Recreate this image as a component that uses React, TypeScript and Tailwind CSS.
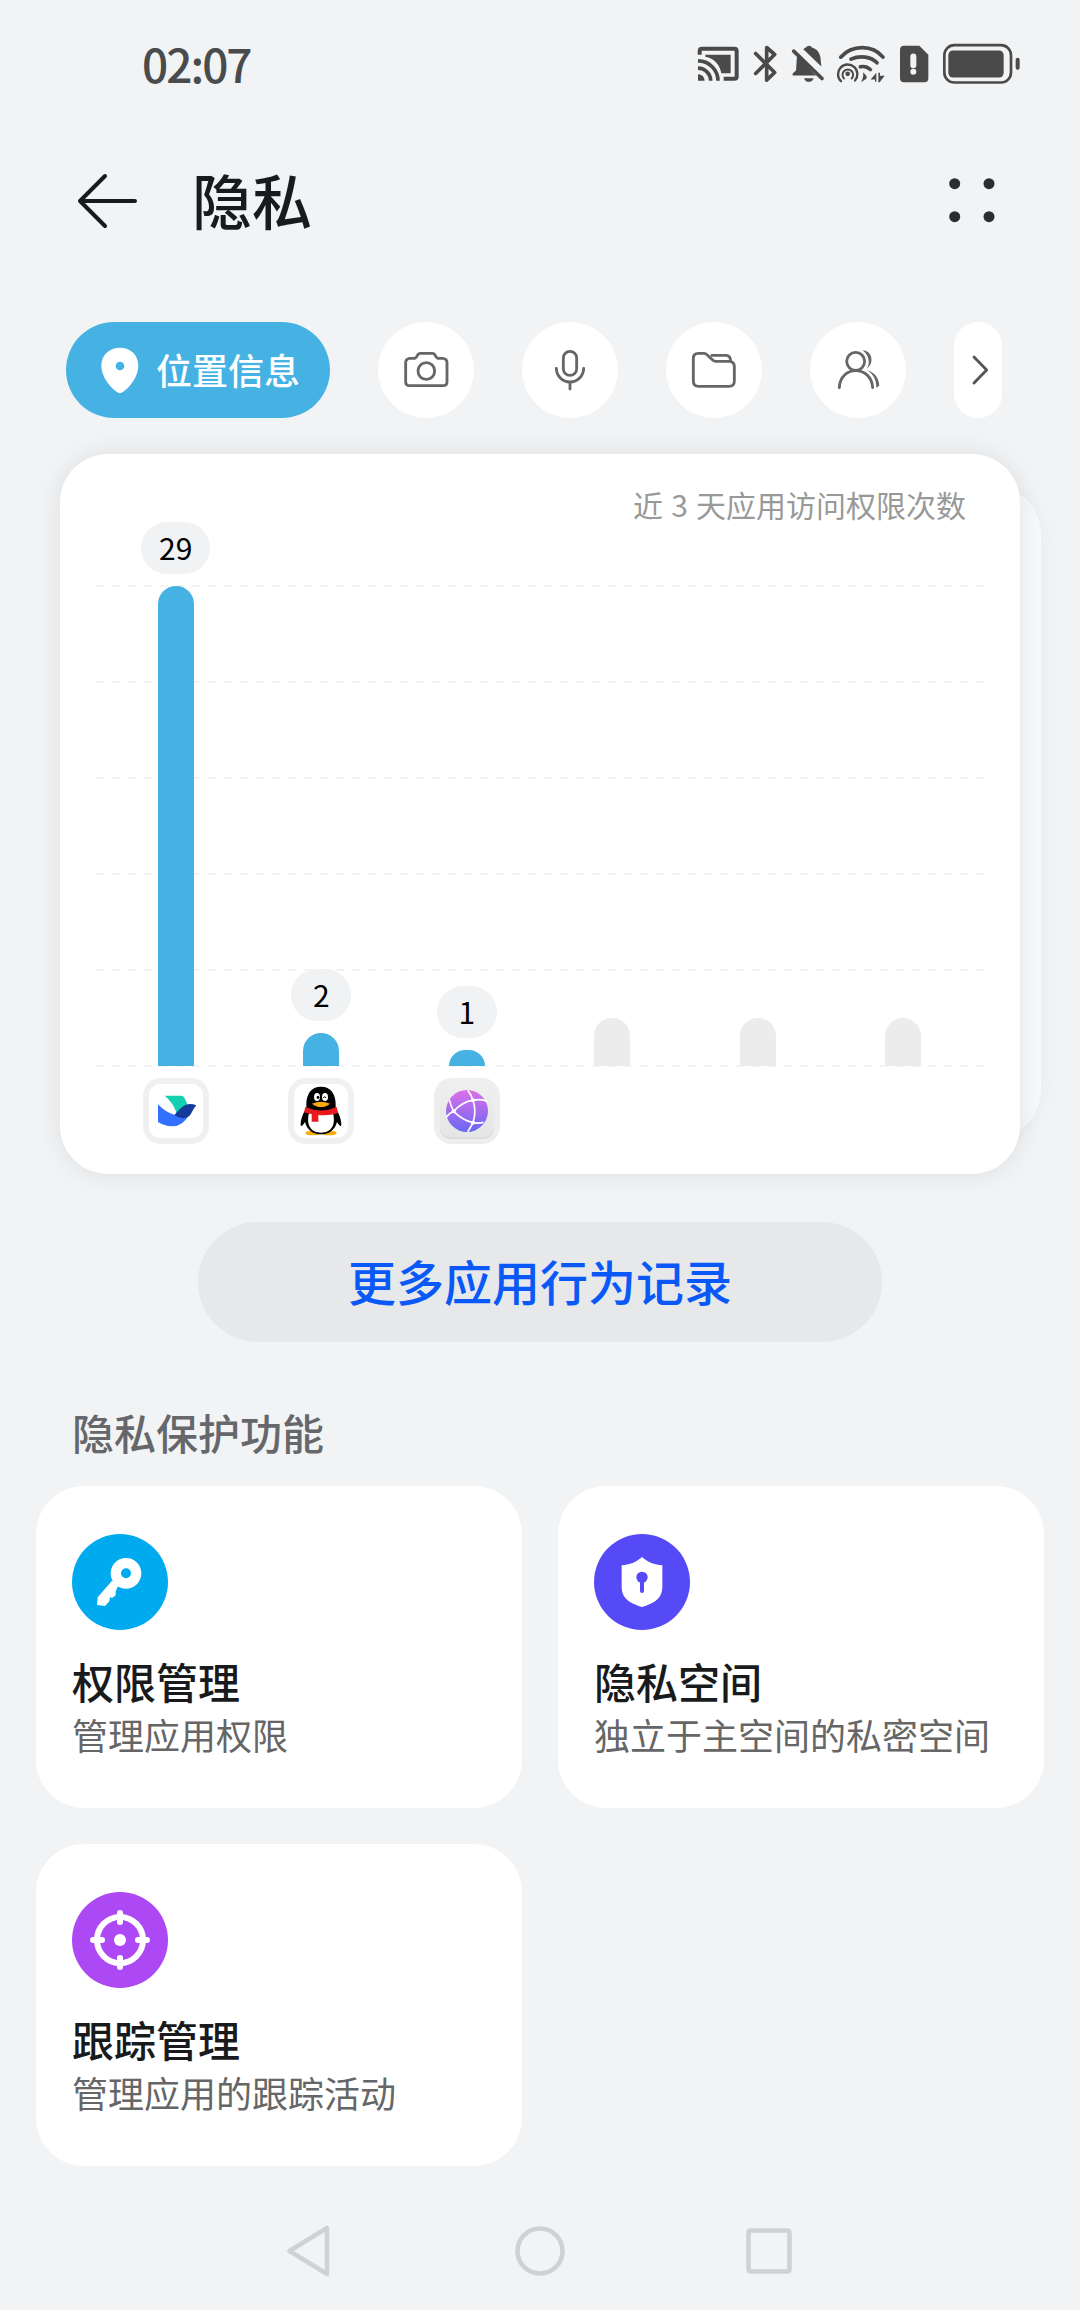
import type { ReactNode } from "react";

function StatusBar() {
  return (
    <header className="flex h-[130px] items-start justify-between pl-[142px] pr-[58px] pt-[36px]">
      <time className="text-[46px] leading-[54px] font-medium tracking-[-2px] text-[#4a4b4d]">02:07</time>
      <div className="mt-[7px] flex items-center text-[#4a4a4a]">
        <svg viewBox="50 40 135 125" className="h-[42px] w-[45px]" fill="none" stroke="currentColor">
          <path d="M61 75V64Q61 57 68 57H165Q172 57 172 64V140Q172 147 165 147H133" strokeWidth="12" />
          <path d="M78 75H154V130H126C121 104 104 86 78 81Z" fill="currentColor" stroke="none" />
          <path d="M56 93A60 60 0 0 1 116 153M56 115A38 38 0 0 1 94 153" strokeWidth="11" />
          <path d="M56 133A20 20 0 0 1 76 153H56Z" fill="currentColor" stroke="none" />
        </svg>
        <svg viewBox="185 40 135 125" className="h-[42px] w-[45px]" fill="none" stroke="currentColor" strokeWidth="11" strokeLinecap="round" strokeLinejoin="round">
          <path d="M229 71L286 128L262 151V53L286 74L229 131" />
        </svg>
        <svg viewBox="320 40 135 125" className="h-[42px] w-[45px]" fill="currentColor">
          <path d="M372 58Q376 54 380 53Q382 48 389 48Q396 48 398 53Q417 58 423 80L426 110Z" />
          <path d="M353 77L410 137H340V131L350 122Z" />
          <path d="M343 64L428 146" stroke="currentColor" strokeWidth="11" strokeLinecap="round" />
          <path d="M374 145H403Q399 156 388 156Q378 156 374 145Z" />
        </svg>
        <svg viewBox="455 40 180 125" className="h-[42px] w-[60px]" fill="none" stroke="currentColor" strokeWidth="11" strokeLinecap="round">
          <path d="M484 82C518 44 580 44 611 82" />
          <path d="M515 88C542 76 575 80 593 99" />
          <path d="M543 111C555 108 564 111 573 119" />
          <path d="M485 154A29 29 0 1 1 527 152" strokeWidth="7" />
          <path d="M494 146A16 16 0 1 1 517 146" strokeWidth="6" />
          <circle cx="505" cy="132" r="7" fill="currentColor" stroke="none" />
          <path d="M551 127Q566 139 561 147L545 157Q554 141 551 127ZM591 129V156H587V149H574ZM597 129H602V138H616L601 157H597Z" fill="currentColor" stroke="none" />
        </svg>
        <svg viewBox="635 40 135 125" className="h-[42px] w-[45px]" fill="currentColor">
          <path d="M674 48H720L747 75V145Q747 157 735 157H674Q662 157 662 145V60Q662 48 674 48Z" />
          <rect x="693" y="71" width="18" height="44" rx="9" fill="#f1f3f5" />
          <circle cx="702" cy="126" r="9" fill="#f1f3f5" />
        </svg>
        <svg viewBox="770 40 258 125" className="h-[42px] w-[86px]" fill="currentColor">
          <rect x="795" y="46" width="200" height="112" rx="30" fill="none" stroke="currentColor" strokeWidth="8" />
          <rect x="807" y="62" width="166" height="81" rx="14" />
          <rect x="1009" y="84" width="12" height="36" rx="6" />
        </svg>
      </div>
    </header>
  );
}

function TitleBar() {
  return (
    <div className="flex h-[142px] items-center pl-[72px] pr-[84px]">
      <svg viewBox="0 0 72 72" className="size-[72px]" fill="none" stroke="#191a1c" strokeWidth="4" strokeLinecap="round" strokeLinejoin="round">
        <path d="M33 11L8 36H63M33 61L8 36" />
      </svg>
      <h1 className="mb-[5px] ml-[48px] flex-1 text-[60px] leading-[72px] font-medium text-[#191a1c]">隐私</h1>
      <svg viewBox="0 0 48 48" className="size-12" fill="#2b2d2f">
        <circle cx="6.700" cy="6.700" r="5.500" />
        <circle cx="41" cy="6.700" r="5.500" />
        <circle cx="6.700" cy="39.700" r="5.500" />
        <circle cx="41" cy="39.700" r="5.500" />
      </svg>
    </div>
  );
}

function RoundTab({ viewBox, children }: { viewBox: string; children: ReactNode }) {
  return (
    <button className="flex size-24 items-center justify-center rounded-full bg-white">
      <svg viewBox={viewBox} className="size-12" fill="none" stroke="#666" strokeWidth="8.500" strokeLinejoin="round">
        {children}
      </svg>
    </button>
  );
}

function Tabs() {
  return (
    <nav className="flex h-24 gap-12 pl-[66px]">
      <button className="flex h-24 w-[264px] items-center gap-3 rounded-full bg-[#46b1e3] pl-[30px] text-[36px] leading-[48px] font-medium text-white">
        <svg viewBox="168 138 144 144" className="size-12">
          <path fillRule="evenodd" fill="white" d="M240 279C227 279 184 238 184 197C184 165 208 143 240 143C272 143 295 165 295 197C295 238 253 279 240 279ZM240 185a13 13 0 1 0 0 26a13 13 0 1 0 0-26Z" />
        </svg>
        <span className="mb-[3px]">位置信息</span>
      </button>
      <RoundTab viewBox="1085 138 144 144">
        <path d="M1123 175Q1129 173 1131 167Q1134 160 1140 160H1176Q1182 160 1185 167Q1187 173 1193 175H1208Q1220 177 1220 188V245Q1220 257 1208 257H1108Q1096 257 1096 245V188Q1096 177 1108 175Z" />
        <circle cx="1158" cy="213" r="25" />
      </RoundTab>
      <RoundTab viewBox="-42 138 144 144">
        <rect x="10" y="154" width="40" height="72" rx="20" />
        <path d="M-11 205A41 41 0 0 0 71 205M30 246V267" strokeLinecap="round" />
      </RoundTab>
      <RoundTab viewBox="390 138 144 144">
        <path d="M415 160H432Q437 160 441 164L458 180Q462 184 467 184H507Q523 184 523 200V243Q523 259 507 259H416Q400 259 400 243V175Q400 160 415 160Z" />
        <path d="M452 166H500Q512 168 512 184" />
      </RoundTab>
      <RoundTab viewBox="822 138 144 144">
        <circle cx="887" cy="184" r="27" />
        <path d="M838 263C840 195 934 195 938 263" strokeLinecap="round" />
        <path d="M908 151C938 152 943 191 921 206C928 194 932 171 908 151ZM922 210C946 218 957 237 958 257L949 263C949 240 940 223 922 210Z" fill="#666" stroke="none" />
      </RoundTab>
      <button className="flex h-24 w-12 items-center justify-center rounded-full bg-white">
        <svg viewBox="1182 138 144 144" className="size-12" fill="none" stroke="#555" strokeWidth="8.500" strokeLinecap="round" strokeLinejoin="round">
          <path d="M1242 171L1280 210L1242 249" />
        </svg>
      </button>
    </nav>
  );
}

function BirdIcon() {
  return (
    <svg viewBox="69 414 198 198" className="size-[66px]">
      <rect x="69" y="414" width="198" height="198" rx="54" fill="#f0f0f0" />
      <rect x="87" y="432" width="162" height="162" rx="34" fill="#fff" />
      <path d="M134 467H183Q190 467 193 473Q200 487 205 500L170 520Q160 488 134 467Z" fill="#14d0b0" />
      <path d="M114 493Q135 516 164 525L209 521Q190 559 156 559Q132 558 114 546Z" fill="#3370ff" />
      <path d="M163 525C175 512 184 500 196 495Q212 489 229 496C218 507 216 521 207 529Q187 542 163 525Z" fill="#133c9a" />
    </svg>
  );
}

function PenguinIcon() {
  return (
    <svg viewBox="505 414 198 198" className="size-[66px]">
      <rect x="505" y="414" width="198" height="198" rx="54" fill="#f0f0f0" />
      <rect x="523" y="432" width="162" height="162" rx="34" fill="#fff" />
      <ellipse cx="580" cy="579" rx="23" ry="7" fill="#faab07" />
      <ellipse cx="628" cy="579" rx="23" ry="7" fill="#faab07" />
      <path d="M604 440C574 440 560 463 560 493V505C549 522 542 541 543 556Q546 562 556 546C563 571 580 583 604 583C628 583 645 571 652 546Q662 562 665 556C666 541 659 522 648 505V493C648 463 634 440 604 440Z" fill="#000" />
      <path d="M568 520H640C650 559 631 578 604 578C577 578 558 559 568 520Z" fill="#fff" />
      <path d="M557 501Q604 522 651 501L655 519Q628 528 596 525V545H576V522Q562 521 553 517Z" fill="#e81a1f" />
      <ellipse cx="592" cy="471" rx="9" ry="12" fill="#fff" />
      <ellipse cx="616" cy="471" rx="9" ry="12" fill="#fff" />
      <ellipse cx="595" cy="472" rx="4" ry="5" fill="#000" />
      <path d="M611 474Q615 465 619 474" fill="none" stroke="#000" strokeWidth="3" />
      <path d="M577 491Q604 480 631 491Q619 501 604 501Q589 501 577 491Z" fill="#faab07" />
    </svg>
  );
}

function BrowserIcon() {
  return (
    <svg viewBox="942 414 198 198" className="size-[66px]">
      <defs>
        <linearGradient id="globe" x1="0" y1="0" x2="0" y2="1">
          <stop offset="0" stopColor="#dc70ea" />
          <stop offset="0.5" stopColor="#a56bed" />
          <stop offset="1" stopColor="#6868f4" />
        </linearGradient>
        <linearGradient id="tile" x1="0" y1="0" x2="0" y2="1">
          <stop offset="0" stopColor="#efefef" />
          <stop offset="1" stopColor="#e4e5e7" />
        </linearGradient>
      </defs>
      <rect x="942" y="414" width="198" height="198" rx="54" fill="#eeeeee" />
      <rect x="960" y="434" width="162" height="163" rx="34" fill="#d6d7d9" />
      <rect x="960" y="432" width="162" height="161" rx="34" fill="url(#tile)" />
      <circle cx="1041" cy="513" r="63" fill="url(#globe)" />
      <g fill="none" stroke="#fff" strokeWidth="5">
        <path d="M1043 451Q1054 463 1059 481Q1070 515 1059 548Q1052 562 1043 575M979 531Q987 520 1001 514Q1028 484 1059 481Q1084 476 1102 484M988 479Q992 498 1001 514Q1028 541 1059 548Q1075 551 1091 547" />
      </g>
      <g fill="#fff">
        <circle cx="1059" cy="481" r="6" />
        <circle cx="1001" cy="514" r="6" />
        <circle cx="1059" cy="548" r="6" />
      </g>
    </svg>
  );
}

const columns: { count?: number; height: number; icon?: ReactNode }[] = [
  { count: 29, height: 480, icon: <BirdIcon /> },
  { count: 2, height: 33, icon: <PenguinIcon /> },
  { count: 1, height: 16, icon: <BrowserIcon /> },
  { height: 48 },
  { height: 48 },
  { height: 48 },
];

function UsageCard() {
  return (
    <section className="relative mx-[60px] mt-9 h-[720px]">
      <div className="absolute top-[32px] right-[-21px] h-[652px] w-[200px] rounded-[48px] bg-[#f7f8fa] shadow-[0_0_20px_rgba(0,0,0,0.04)]" />
      <div className="relative h-full rounded-[48px] bg-white px-9 pt-[33px] shadow-[0_0_24px_rgba(0,0,0,0.09)]">
        <p className="mb-px pr-[18px] text-right text-[30px] leading-[34px] [word-spacing:1.5px] text-[#999]">近 3 天应用访问权限次数</p>
        <div className="grid grid-cols-1">
          <div className="col-start-1 row-start-1 flex h-[545px] flex-col justify-between pt-[63px]">
            {[5, 4, 3, 2, 1, 0].map((line) => (
              <div key={line} className="h-0.5 bg-[repeating-linear-gradient(90deg,#f3f3f3_0_8px,transparent_8px_16px)]" />
            ))}
          </div>
          <div className="col-start-1 row-start-1 ml-[7px] grid w-[873px] grid-cols-6">
            {columns.map((column, index) => (
              <div key={index} className="flex flex-col items-center">
                <div className="flex h-[544px] flex-col items-center justify-end gap-3">
                  {column.count !== undefined && (
                    <span className="flex h-[52px] min-w-[60px] items-center justify-center rounded-full bg-[#f1f2f4] px-[18px] pb-[2px] text-[30px] leading-[36px] text-black">
                      {column.count}
                    </span>
                  )}
                  <div
                    className={column.count !== undefined ? "w-9 rounded-t-[18px] bg-[#46b1e3]" : "w-9 rounded-t-[18px] bg-[#ececec]"}
                    style={{ height: column.height }}
                  />
                </div>
                {column.icon && <div className="mt-3">{column.icon}</div>}
              </div>
            ))}
          </div>
        </div>
      </div>
    </section>
  );
}

function FeatureCard({ title, note, children }: { title: string; note: string; children: ReactNode }) {
  return (
    <article className="h-[322px] rounded-[48px] bg-white px-9 pt-12">
      {children}
      <h3 className="mt-[23px] mb-px text-[42px] leading-[56px] font-medium text-[#191a1c]">{title}</h3>
      <p className="text-[36px] leading-[48px] text-[#666]">{note}</p>
    </article>
  );
}

function NavigationBar() {
  return (
    <footer className="mt-[49px] flex items-center pl-[273px] text-[#d0d1d3]">
      <svg viewBox="0 0 72 72" className="size-[72px]" fill="none" stroke="currentColor" strokeWidth="4.500" strokeLinejoin="round">
        <path d="M16.500 36L54 13V59Z" />
      </svg>
      <svg viewBox="0 0 72 72" className="ml-[159px] size-[72px]" fill="none" stroke="currentColor" strokeWidth="4.500">
        <circle cx="36" cy="36" r="22.500" />
      </svg>
      <svg viewBox="0 0 72 72" className="ml-[157px] size-[72px]" fill="none" stroke="currentColor" strokeWidth="4.500">
        <rect x="15.500" y="15.500" width="41" height="41" rx="2" />
      </svg>
    </footer>
  );
}

export default function App() {
  return (
    <main lang="zh-CN" className="h-[2310px] w-[1080px] overflow-hidden bg-[#f1f3f5] font-['Noto_Sans_CJK_SC',sans-serif]">
      <StatusBar />
      <TitleBar />
      <div className="h-[50px]" />
      <Tabs />
      <UsageCard />
      <button className="mx-auto mt-12 flex h-[120px] w-[684px] items-center justify-center rounded-full bg-[#e6e8ea] pb-[5px] text-[48px] font-medium text-[#0a59f7]">
        更多应用行为记录
      </button>
      <h2 className="mt-[61px] pl-[72px] text-[42px] leading-[58px] font-medium text-[#66676a]">隐私保护功能</h2>
      <div className="mx-9 mt-[25px] grid grid-cols-2 gap-9">
        <FeatureCard title="权限管理" note="管理应用权限">
          <svg viewBox="126 162 288 288" className="size-24">
            <circle cx="270" cy="306" r="144" fill="#00aaee" />
            <circle cx="288" cy="280" r="30.500" fill="none" stroke="#fff" strokeWidth="31" />
            <path d="M246 302L203 352L201 375L225 378L238 364L240 351L246 354L257 346V335L262 322L275 318Z" fill="#fff" />
          </svg>
        </FeatureCard>
        <FeatureCard title="隐私空间" note="独立于主空间的私密空间">
          <svg viewBox="0 0 288 288" className="size-24">
            <circle cx="144" cy="144" r="144" fill="#564af7" />
            <path d="M144 69C160 84 182 93 205 94V158C205 200 170 210 144 219C118 210 83 200 83 158V94C106 93 128 84 144 69Z" fill="#fff" />
            <circle cx="144" cy="130" r="17" fill="#564af7" />
            <path d="M144 135V171" stroke="#564af7" strokeWidth="12" strokeLinecap="round" />
          </svg>
        </FeatureCard>
        <FeatureCard title="跟踪管理" note="管理应用的跟踪活动">
          <svg viewBox="0 0 288 288" className="size-24">
            <circle cx="144" cy="144" r="144" fill="#ac49f5" />
            <circle cx="144" cy="144" r="69" fill="none" stroke="#fff" strokeWidth="18" />
            <path d="M144 63V90M144 198V225M63 144H90M198 144H225" stroke="#fff" strokeWidth="18" strokeLinecap="round" />
            <circle cx="144" cy="144" r="18" fill="#fff" />
          </svg>
        </FeatureCard>
      </div>
      <NavigationBar />
    </main>
  );
}
